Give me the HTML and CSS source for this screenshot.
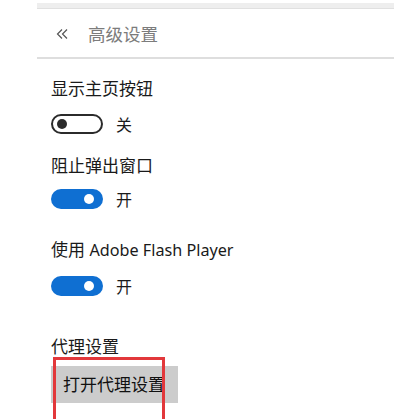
FILE: index.html
```html
<!DOCTYPE html>
<html lang="zh-CN">
<head>
<meta charset="utf-8">
<link rel="stylesheet" href="styles.css">
</head>
<body>
<div class="panel">
  <div class="topbar"></div>
  <div class="header">
    <svg class="back" width="12" height="12" viewBox="0 0 12 12">
      <polyline points="6,1.5 1.5,6 6,10.5" fill="none" stroke="#555" stroke-width="1.2"/>
      <polyline points="11,1.5 6.5,6 11,10.5" fill="none" stroke="#555" stroke-width="1.2"/>
    </svg>
    <span class="title">高级设置</span>
  </div>
  <div class="content">
    <div class="group g1">
      <div class="label">显示主页按钮</div>
      <div class="toggle-row t1">
        <span class="toggle off"><span class="thumb"></span></span>
        <span class="state">关</span>
      </div>
    </div>
    <div class="group g2">
      <div class="label">阻止弹出窗口</div>
      <div class="toggle-row t2">
        <span class="toggle on"><span class="thumb"></span></span>
        <span class="state">开</span>
      </div>
    </div>
    <div class="group g3">
      <div class="label">使用 <span class="latin">Adobe Flash Player</span></div>
      <div class="toggle-row t3">
        <span class="toggle on"><span class="thumb"></span></span>
        <span class="state">开</span>
      </div>
    </div>
    <div class="group g4">
      <div class="label">代理设置</div>
      <div class="button-wrap">
        <span class="button">打开代理设置</span>
      </div>
    </div>
  </div>
</div>
<div class="highlight"></div>
</body>
</html>
```

FILE: styles.css
```css
html, body {
  margin: 0;
  padding: 0;
  background: #fff;
  height: 419px;
  overflow: hidden;
}
body {
  position: relative;
  font-family: "Noto Sans", "Noto Sans CJK SC", sans-serif;
  color: #1a1a1a;
}
.panel {
  margin-left: 37px;
  width: 357px;
  padding-top: 3px;
}
.topbar {
  height: 5px;
  background: #eeeeee;
  border-bottom: 1px solid #e0e0e0;
}
.header {
  height: 48px;
  display: flex;
  align-items: center;
  border-bottom: 2px solid #dedede;
  padding-left: 19px;
  gap: 20px;
}
.back {
  display: block;
  margin-top: 2px;
}
.title {
  font-size: 17.5px;
  color: #7c7c7c;
  line-height: 22px;
  margin-top: 2px;
}
.content {
  padding-left: 14px;
}
.label {
  font-size: 17px;
  line-height: 22px;
  height: 22px;
  white-space: nowrap;
}
.latin {
  font-size: 16.2px;
}
.g1 { margin-top: 19px; }
.g2 { margin-top: 21px; }
.g3 { margin-top: 30px; }
.g4 { margin-top: 40px; }
.t1 { margin-top: 14px; }
.t2 { margin-top: 12px; }
.t3 { margin-top: 15px; }
.toggle-row {
  display: flex;
  align-items: center;
  height: 20px;
  gap: 13px;
}
.toggle {
  box-sizing: border-box;
  width: 52px;
  height: 20px;
  border-radius: 10px;
  position: relative;
  display: block;
}
.toggle.off {
  border: 2px solid #2b2b2b;
}
.toggle.on {
  background: #0f6fd2;
}
.thumb {
  position: absolute;
  width: 10px;
  height: 10px;
  border-radius: 50%;
  top: 5px;
}
.off .thumb {
  background: #2b2b2b;
  left: 4px;
  top: 3px;
}
.on .thumb {
  background: #fff;
  left: 33px;
}
.state {
  font-size: 16px;
  line-height: 20px;
  font-family: "Noto Sans CJK SC", sans-serif;
}
.button-wrap {
  margin-top: 8px;
  display: flex;
}
.button {
  background: #cccccc;
  height: 37px;
  width: 127px;
  box-sizing: border-box;
  padding-left: 12px;
  font-size: 17px;
  line-height: 37px;
  color: #111;
  white-space: nowrap;
}
.highlight {
  position: absolute;
  left: 53px;
  top: 357px;
  width: 112px;
  height: 80px;
  box-sizing: border-box;
  border: 3px solid #e2383b;
}
```
